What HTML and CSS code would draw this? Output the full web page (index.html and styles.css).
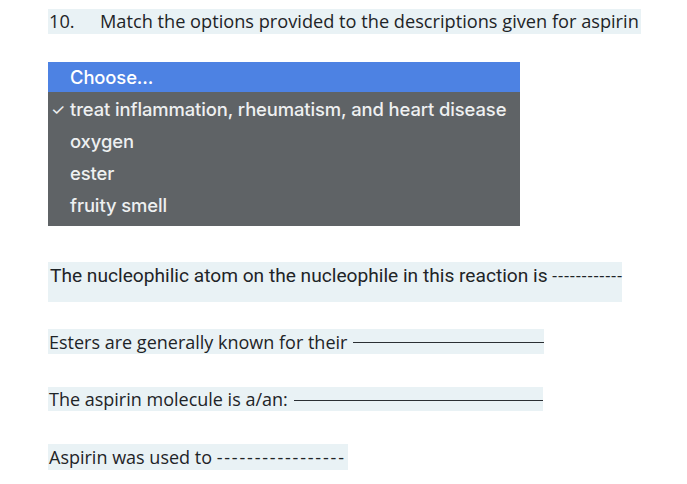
FILE: index.html
```html
<!DOCTYPE html>
<html>
<head>
<meta charset="utf-8">
<link rel="stylesheet" href="styles.css">
</head>
<body>
<div class="page">
  <div class="q-title"><span class="q-num">10.</span><span>Match the options provided to the descriptions given for aspirin</span></div>
  <div class="menu">
    <div class="opt selected">Choose...</div>
    <div class="opt"><span class="check">✓</span>treat inflammation, rheumatism, and heart disease</div>
    <div class="opt">oxygen</div>
    <div class="opt">ester</div>
    <div class="opt">fruity smell</div>
  </div>
  <div class="desc nucleo">The nucleophilic atom on the nucleophile in this reaction is&nbsp;<span class="dashes d-nuc">------------</span></div>
  <div class="desc esters">Esters are generally known for their <span class="line"></span></div>
  <div class="desc molecule">The aspirin molecule is a/an: <span class="line"></span></div>
  <div class="desc used">Aspirin was used to&nbsp;<span class="dashes d-used">-----------------</span></div>
</div>
</body>
</html>
```
FILE: styles.css
```css
html, body { margin: 0; padding: 0; background: #fff; }
.page { padding: 9px 0 0 48px; display: flex; flex-direction: column; align-items: flex-start; }
.q-title {
  font-family: "Open Sans", "Noto Sans", sans-serif;
  font-size: 18.2px;
  color: #1e2427;
  background: #e9f2f5;
  height: 25px;
  line-height: 25px;
  width: 593px;
  box-sizing: border-box;
  padding-left: 1px;
  display: flex;
  white-space: nowrap;
  overflow: hidden;
}
.q-num { width: 51px; }
.menu {
  margin-top: 28px;
  width: 472px;
  background: #5f6366;
  padding-bottom: 4px;
  font-family: Inter, "Noto Sans", sans-serif;
  font-weight: 500;
  font-size: 18.4px;
  color: #eef0f1;
}
.opt {
  height: 32px;
  line-height: 31px;
  padding-left: 22px;
  position: relative;
  white-space: nowrap;
  letter-spacing: -0.1px;
}
.opt.selected { background: #4d82e3; height: 30px; line-height: 30px; margin-bottom: 2px; color: #fff; }
.check { position: absolute; left: 3px; font-size: 16px; font-weight: 400; }
.desc {
  font-family: "Open Sans", "Noto Sans", sans-serif;
  font-size: 18px;
  color: #1e2427;
  background: #e9f2f5;
  white-space: nowrap;
  display: flex;
  align-items: center;
  box-sizing: border-box;
}
.nucleo {
  font-family: Roboto, sans-serif;
  font-size: 19.15px;
  margin-top: 36px;
  width: 574px;
  height: 40px;
  padding: 0 0 13px 2px;
}
.esters { margin-top: 27px; width: 496px; height: 25px; padding-left: 1px; }
.molecule { margin-top: 33px; width: 495px; height: 24px; padding-left: 1px; }
.used { margin-top: 33px; width: 300px; height: 26px; padding-left: 1px; }
.line { flex: 1; height: 1px; background: #2a2f33; margin-left: 6px; margin-top: 2px; }
.d-nuc { letter-spacing: 1.2px; font-size: 17px; }
.d-used { letter-spacing: 1.8px; }
```
